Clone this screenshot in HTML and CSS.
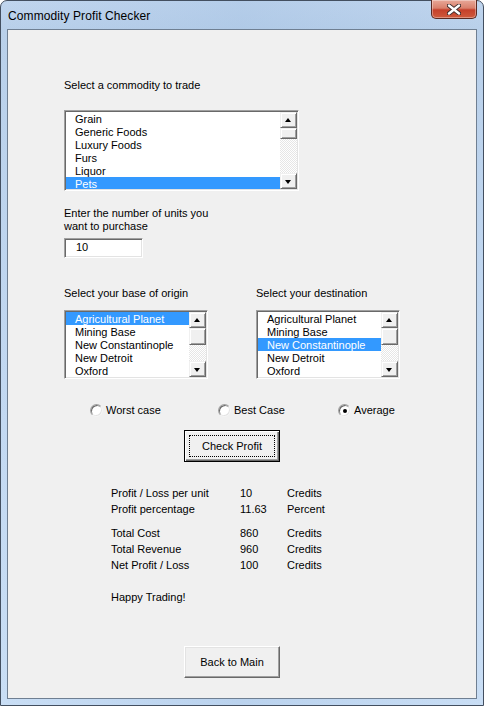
FILE: index.html
```html
<!DOCTYPE html>
<html>
<head>
<meta charset="UTF-8">
<title>Commodity Profit Checker</title>
<link rel="stylesheet" href="styles.css">
</head>
<body>
<div class="window">
  <div class="titlebar">
    <span class="title">Commodity Profit Checker</span>
    <span class="close">
      <svg width="14" height="11" viewBox="0 0 14 11">
        <path d="M2 1.5 L12 9.5 M12 1.5 L2 9.5" stroke="#3a2a2a" stroke-width="4.2" stroke-linecap="round"/>
        <path d="M2 1.5 L12 9.5 M12 1.5 L2 9.5" stroke="#ffffff" stroke-width="2.4" stroke-linecap="round"/>
      </svg>
    </span>
  </div>

  <div class="client">
    <p class="label first">Select a commodity to trade</p>
    <div class="listbox commodity">
      <ul class="items">
        <li>Grain</li>
        <li>Generic Foods</li>
        <li>Luxury Foods</li>
        <li>Furs</li>
        <li>Liquor</li>
        <li class="sel">Pets</li>
      </ul>
      <div class="scrollbar">
        <span class="sbtn up"></span>
        <span class="thumb small"></span>
        <span class="track"></span>
        <span class="sbtn down"></span>
      </div>
    </div>

    <p class="label units">Enter the number of units you<br>want to purchase</p>
    <div class="textbox">10</div>

    <div class="pair">
      <p class="label">Select your base of origin</p>
      <p class="label">Select your destination</p>
      <div class="listbox place">
        <ul class="items">
          <li class="sel">Agricultural Planet</li>
          <li>Mining Base</li>
          <li>New Constantinople</li>
          <li>New Detroit</li>
          <li>Oxford</li>
        </ul>
        <div class="scrollbar">
          <span class="sbtn up"></span>
          <span class="thumb"></span>
          <span class="track"></span>
          <span class="sbtn down"></span>
        </div>
      </div>
      <div class="listbox place">
        <ul class="items">
          <li>Agricultural Planet</li>
          <li>Mining Base</li>
          <li class="sel">New Constantinople</li>
          <li>New Detroit</li>
          <li>Oxford</li>
        </ul>
        <div class="scrollbar">
          <span class="sbtn up"></span>
          <span class="thumb"></span>
          <span class="track"></span>
          <span class="sbtn down"></span>
        </div>
      </div>
    </div>

    <div class="radios">
      <label class="radio"><span class="dot"></span>Worst case</label>
      <label class="radio"><span class="dot"></span>Best Case</label>
      <label class="radio"><span class="dot on"></span>Average</label>
    </div>

    <div class="button default"><span class="focus">Check Profit</span></div>

    <div class="results">
      <span>Profit / Loss per unit</span><span>10</span><span>Credits</span>
      <span>Profit percentage</span><span>11.63</span><span>Percent</span>
      <span class="gap">Total Cost</span><span class="gap">860</span><span class="gap">Credits</span>
      <span>Total Revenue</span><span>960</span><span>Credits</span>
      <span>Net Profit / Loss</span><span>100</span><span>Credits</span>
    </div>
    <p class="happy">Happy Trading!</p>

    <div class="button back"><span>Back to Main</span></div>
  </div>
</div>
</body>
</html>
```

FILE: styles.css
```css
body { margin: 0; background: #ffffff; }
p { margin: 0; }
ul { margin: 0; padding: 0; list-style: none; }

div.window { width: 484px; height: 706px; box-sizing: border-box; border: 1px solid #434f60; border-radius: 7px 7px 0 0;
  padding: 0 6px 6px 6px; display: flex; flex-direction: column;
  background: linear-gradient(90deg, rgba(255,255,255,0) 0, rgba(160,190,225,0.35) 50%, rgba(255,255,255,0) 100%),
              linear-gradient(180deg, #c0d5ee 0, #b9d0ea 28px, #c3d9f2 60%, #c9def5 100%); }

div.titlebar { height: 28px; display: flex; align-items: flex-start; justify-content: space-between; }
span.title { font-family: "Liberation Sans", Arial, sans-serif; font-size: 12px; color: #000; margin: 8px 0 0 1px; letter-spacing: 0.1px; }
span.close { width: 46px; height: 19px; margin: -1px 0 0 0; box-sizing: border-box; border: 1px solid #5a2a22; border-top: 0;
  border-radius: 0 0 5px 5px; display: flex; align-items: center; justify-content: center;
  background: linear-gradient(180deg, #e8a898 0, #d9806c 45%, #c5402a 55%, #cf5a3c 100%); box-shadow: inset 0 0 0 1px rgba(255,255,255,0.35); }

div.client { flex: 1; background: #f0f0f0; border: 1px solid #6f7f92; padding: 49px 0 0 56px;
  font-family: "Liberation Sans", Arial, sans-serif; font-size: 11px; color: #000; }

p.label { line-height: 13px; white-space: nowrap; }
p.units { margin-top: 16px; }

div.listbox { position: relative; box-sizing: border-box; background: #fff; display: flex; overflow: hidden;
  border: 1px solid; border-color: #a0a0a0 #ffffff #ffffff #a0a0a0; box-shadow: inset 1px 1px 0 #696969, inset -1px -1px 0 #e3e3e3; padding: 1px; }
div.commodity { width: 235px; height: 81px; margin-top: 18px; }
div.place { width: 144px; height: 69px; margin-top: 10px; }
ul.items { flex: 1; overflow: hidden; }
ul.items li { height: 13px; line-height: 14px; padding-left: 9px; white-space: nowrap; }
ul.items li.sel { background: #3399ff; color: #fff; }

div.scrollbar { width: 17px; display: flex; flex-direction: column;
  background: repeating-conic-gradient(#ffffff 0 25%, #e6e6e6 0 50%) 0 0 / 2px 2px; }
span.sbtn, span.thumb { display: block; box-sizing: border-box; background: #f0f0f0; border: 1px solid; border-color: #f0f0f0 #696969 #696969 #f0f0f0;
  box-shadow: inset 1px 1px 0 #fff, inset -1px -1px 0 #a0a0a0; }
span.sbtn { height: 16px; position: relative; }
span.thumb { height: 17px; }
span.thumb.small { height: 11px; }
span.track { flex: 1; }
span.sbtn::after { content: ""; position: absolute; left: 4px; top: 5px; border-left: 3.5px solid transparent; border-right: 3.5px solid transparent; }
span.up::after { border-bottom: 4px solid #000; }
span.down::after { border-top: 4px solid #000; top: 6px; }

div.textbox { width: 79px; height: 20px; box-sizing: border-box; margin-top: 5px; background: #fff; line-height: 17px; padding-left: 11px;
  border: 1px solid; border-color: #a0a0a0 #ffffff #ffffff #a0a0a0; box-shadow: inset 1px 1px 0 #696969, inset -1px -1px 0 #e3e3e3; }

div.pair { display: grid; grid-template-columns: 192px 144px; margin-top: 29px; }

div.radios { display: grid; grid-template-columns: 128px 120px auto; margin: 25px 0 0 26px; line-height: 13px; }
label.radio { display: flex; align-items: center; gap: 3px; }
span.dot { width: 13px; height: 13px; box-sizing: border-box; border-radius: 50%; background: #fff; display: flex; align-items: center; justify-content: center;
  border: 1px solid; border-color: #a0a0a0 #f4f4f4 #f4f4f4 #a0a0a0; box-shadow: inset 1px 1px 0 #696969, inset -1px -1px 0 #e3e3e3; }
span.dot.on::after { content: ""; width: 4px; height: 4px; border-radius: 50%; background: #000; }

div.button { width: 96px; height: 32px; box-sizing: border-box; margin-left: 120px; display: flex; align-items: center; justify-content: center;
  background: #f0f0f0; border: 1px solid; border-color: #ffffff #696969 #696969 #ffffff; box-shadow: inset -1px -1px 0 #a0a0a0, inset 1px 1px 0 #e3e3e3; }
div.default { margin-top: 13px; border: 1px solid #000; box-shadow: inset 1px 1px 0 #fff, inset -1px -1px 0 #696969, inset -2px -2px 0 #a0a0a0; }
span.focus { width: 86px; height: 22px; box-sizing: border-box; border: 1px dotted #000; display: flex; align-items: center; justify-content: center; }
div.back { margin-top: 41px; }

div.results { display: grid; grid-template-columns: 129px 47px auto; margin: 23px 0 0 47px; line-height: 16px; }
div.results span.gap { margin-top: 8px; }
p.happy { margin: 16px 0 0 47px; line-height: 16px; }
```
